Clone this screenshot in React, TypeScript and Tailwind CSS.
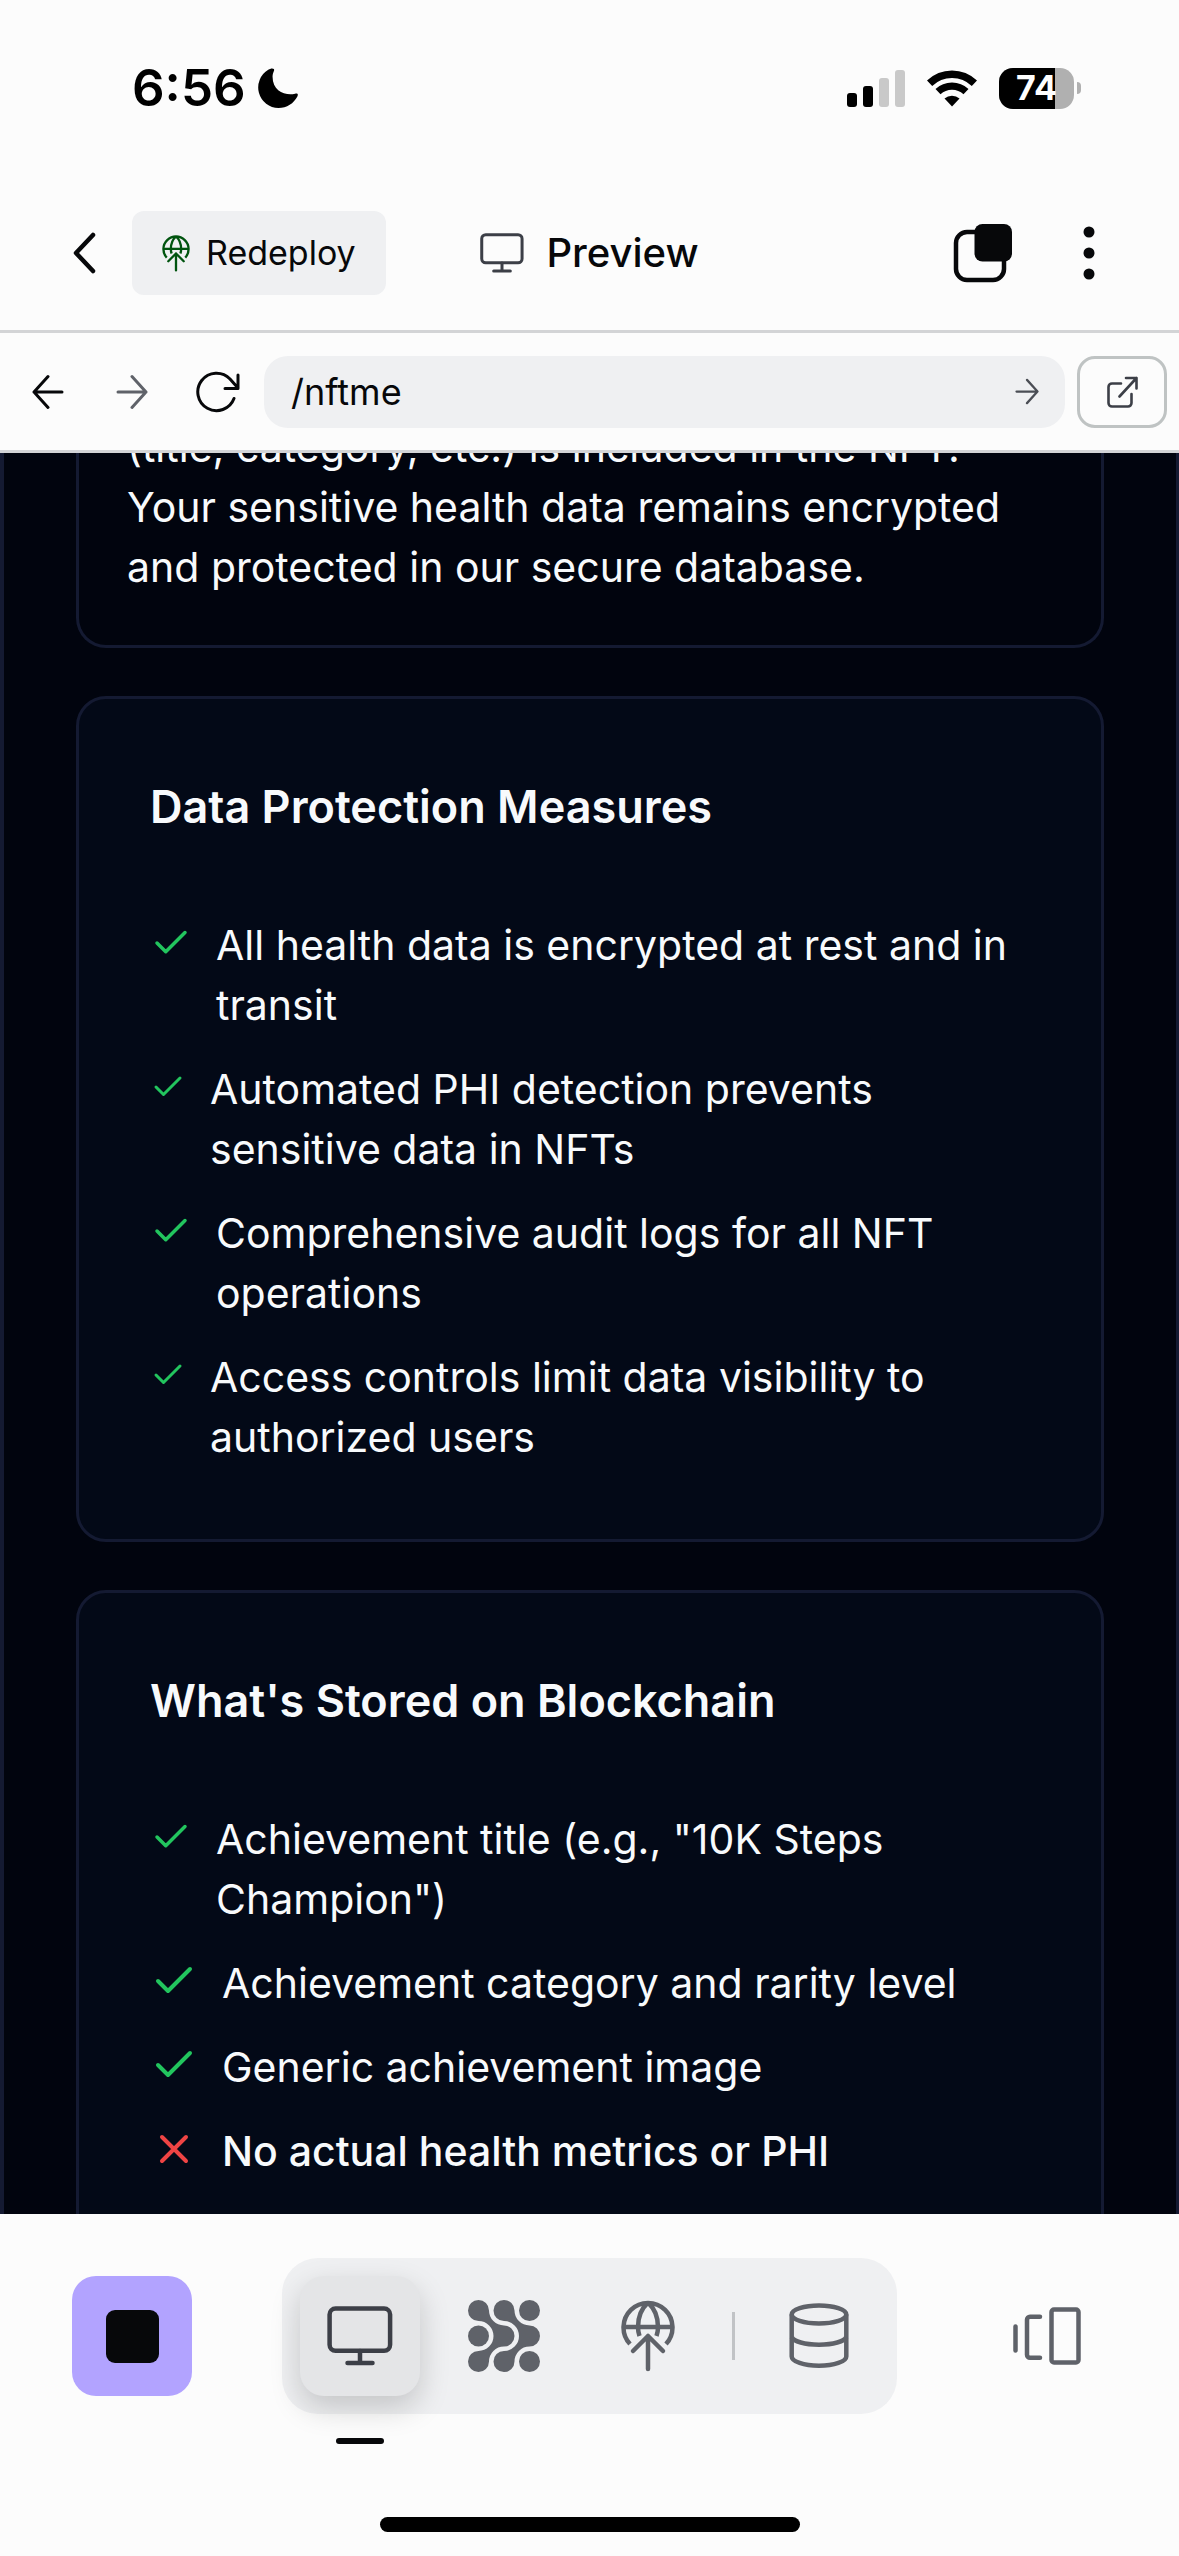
import React from "react";

type IconProps = { className?: string };

function MonitorIcon({ className }: IconProps) {
  return (
    <svg viewBox="0 0 66 60" fill="none" stroke="currentColor" strokeWidth="4.5" strokeLinecap="round" className={className} aria-hidden="true">
      <rect x="2.6" y="2.6" width="60.5" height="42.2" rx="6" />
      <path d="M33 45v11M20.5 57h25" />
    </svg>
  );
}

function GlobeUpIcon({ className }: IconProps) {
  return (
    <svg viewBox="0 0 54 72" fill="none" stroke="currentColor" strokeWidth="4.5" strokeLinejoin="round" className={className} aria-hidden="true">
      <path d="M9 44A24.5 24.5 0 1 1 45 44" />
      <path d="M2.5 27h49" />
      <path d="M26.5 3C20 9 17 18 17 27c0 3 .4 6 1.5 9M27.5 3C34 9 37 18 37 27c0 3-.4 6-1.5 9" />
      <path d="M27 36v33M12 51l15-15 15 15" strokeLinecap="round" />
    </svg>
  );
}

function AgentIcon({ className }: IconProps) {
  const blob =
    "M21 10.5A15 15 0 0 0 36 25.5A10.5 10.5 0 0 1 36 46.5A15 15 0 0 0 21 61.5A10.5 10.5 0 1 1 10.5 51A15 15 0 0 0 10.5 21A10.5 10.5 0 1 1 21 10.5Z";
  return (
    <svg viewBox="0 0 72 72" fill="currentColor" className={className} aria-hidden="true">
      <path d={blob} />
      <path d={blob} transform="translate(25.5 0)" />
      <circle cx="61.5" cy="10.5" r="10.5" />
      <circle cx="10.5" cy="36" r="10.5" />
      <circle cx="61.5" cy="61.5" r="10.5" />
    </svg>
  );
}

function DatabaseIcon({ className }: IconProps) {
  return (
    <svg viewBox="0 0 60 66" fill="none" stroke="currentColor" strokeWidth="4.5" className={className} aria-hidden="true">
      <ellipse cx="30" cy="11.5" rx="27.3" ry="9" />
      <path d="M2.7 11.5v42c0 5 12 9.2 27.3 9.2s27.3-4.2 27.3-9.2v-42" />
      <path d="M2.7 34c2 4.5 13 7.7 27.3 7.7S55.3 38.5 57.3 34" />
    </svg>
  );
}

function DevicesIcon({ className }: IconProps) {
  return (
    <svg viewBox="0 0 68 58" fill="none" stroke="currentColor" strokeWidth="4.5" strokeLinecap="round" className={className} aria-hidden="true">
      <path d="M2.5 19.5v24M27 9.8H17a3 3 0 0 0-3 3v35a3 3 0 0 0 3 3h10" />
      <rect x="38.5" y="2.5" width="27" height="53" rx="2.5" />
    </svg>
  );
}

function ArrowIcon({ className, flip }: IconProps & { flip?: boolean }) {
  return (
    <svg viewBox="0 0 32 36" fill="none" stroke="currentColor" strokeWidth="3" strokeLinecap="round" strokeLinejoin="round" className={className} aria-hidden="true">
      <path d={flip ? "M30 18H2M16 2.5L2 18l14 15.5" : "M2 18h28M16 2.5L30 18 16 33.5"} />
    </svg>
  );
}

function CheckIcon({ className }: IconProps) {
  return (
    <svg viewBox="0 0 24 24" fill="none" stroke="currentColor" strokeWidth="2" strokeLinecap="round" strokeLinejoin="round" className={className} aria-hidden="true">
      <path d="M20 6 9 17l-5-5" />
    </svg>
  );
}

function CrossIcon({ className }: IconProps) {
  return (
    <svg viewBox="0 0 24 24" fill="none" stroke="currentColor" strokeWidth="2" strokeLinecap="round" strokeLinejoin="round" className={className} aria-hidden="true">
      <path d="M18 6 6 18M6 6l12 12" />
    </svg>
  );
}

function StatusBar() {
  return (
    <div className="flex h-[176px] items-center justify-between pr-[98px] pl-[132px] text-black">
      <div className="flex items-center gap-3">
        <span className="text-[51px] leading-[60px] font-semibold">6:56</span>
        <svg viewBox="0 0 39 39" className="h-10 w-10" fill="currentColor" role="img" aria-label="Focus mode">
          <path d="M15.5 1C14-.2 12 .5 10 1.8A20 20 0 0 0 20 39c8 0 15-4.500 18.500-11.500 1-2.200-.3-3-2.300-2.500-9 2.200-22-2-22-16.500 0-2.500.7-4 1.300-5.500.3-.8.3-1.500 0-2Z" />
        </svg>
      </div>
      <div className="flex items-center gap-[22px]">
        <svg viewBox="0 0 58 37" className="h-[37px] w-[58px]" role="img" aria-label="Signal">
          <g fill="#000">
            <rect y="23" width="10" height="14" rx="3" />
            <rect x="16" y="16" width="10" height="21" rx="3" />
          </g>
          <g fill="#c9c9c9">
            <rect x="32" y="8" width="10" height="29" rx="3" />
            <rect x="48" width="10" height="37" rx="3" />
          </g>
        </svg>
        <svg viewBox="0 0 50 37" className="h-[37px] w-[50px]" fill="none" stroke="#000" role="img" aria-label="Wi-Fi">
          <path d="M2.6 13.3A32.3 32.3 0 0 1 47.4 13.3" strokeWidth="7.5" />
          <path d="M11 21.6A20.5 20.5 0 0 1 39 21.6" strokeWidth="7.3" />
          <path d="M25 36.5L17.5 28.5A11.5 11.5 0 0 1 32.5 28.5Z" fill="#000" stroke="none" />
        </svg>
        <div className="flex items-center gap-[3px]">
          <div className="relative flex h-[41px] w-[75px] items-center justify-center overflow-hidden rounded-[14px] bg-[#b0b0b0]">
            <div className="absolute inset-y-0 left-0 w-3/4 bg-black" />
            <span className="relative text-[34px] leading-[40px] font-bold text-white">74</span>
          </div>
          <div className="h-3 w-1 rounded-r-full bg-[#b0b0b0]" />
        </div>
      </div>
    </div>
  );
}

function TitleBar() {
  return (
    <div className="grid h-[154px] grid-cols-[1fr_auto_1fr] items-center px-[72px]">
      <div className="flex items-center gap-9">
        <button type="button" aria-label="Back">
          <svg viewBox="0 0 24 42" className="h-[42px] w-6" fill="none" stroke="#07080a" strokeWidth="4.5" strokeLinecap="round" strokeLinejoin="round">
            <path d="M21 3L4 21l17 18" />
          </svg>
        </button>
        <button type="button" className="flex h-[84px] items-center gap-4 rounded-xl bg-[#eff0f2] px-[30px] text-[34px] leading-[48px] text-[#07080a]">
          <GlobeUpIcon className="h-[37px] w-7 text-[#00540f]" />
          Redeploy
        </button>
      </div>
      <h1 className="flex items-center gap-[22px] text-[40px] leading-[48px] font-medium text-[#07080a]">
        <MonitorIcon className="h-10 w-11 text-[#3c3f47]" />
        Preview
      </h1>
      <div className="mr-3 flex items-center justify-end gap-[70px]">
        <button type="button" aria-label="Tabs">
          <svg viewBox="0 0 60 60" className="h-[60px] w-[60px]" fill="none">
            <rect x="3" y="9" width="48" height="48" rx="11" stroke="#07080a" strokeWidth="4.5" />
            <rect x="21.5" y="1" width="37.5" height="37.5" rx="8" fill="#07080a" />
          </svg>
        </button>
        <button type="button" aria-label="More options">
          <svg viewBox="0 0 12 54" className="h-[54px] w-3" fill="#07080a">
            <circle cx="6" cy="6" r="5.5" />
            <circle cx="6" cy="27" r="5.5" />
            <circle cx="6" cy="48" r="5.5" />
          </svg>
        </button>
      </div>
    </div>
  );
}

function AddressBar() {
  return (
    <div className="flex h-[123px] items-center border-y-3 border-[#d3d4d6] pr-3 pl-8 text-[#07080a]">
      <button type="button" aria-label="Go back">
        <ArrowIcon flip className="h-9 w-8" />
      </button>
      <button type="button" aria-label="Go forward" className="ml-[52px] text-[#5f6269]">
        <ArrowIcon className="h-9 w-8" />
      </button>
      <button type="button" aria-label="Reload" className="ml-[47px]">
        <svg viewBox="0 0 46 44" className="h-11 w-[46px]" fill="none" stroke="currentColor" strokeWidth="3" strokeLinecap="round" strokeLinejoin="round">
          <path d="M39 28.5A18.7 18.7 0 1 1 35 9L43 18M43 5v13.5H30" />
        </svg>
      </button>
      <form className="ml-[23px] flex h-[72px] min-w-0 flex-1 items-center rounded-[24px] bg-[#eff0f2] pr-[26px] pl-[27px]" onSubmit={(e) => e.preventDefault()}>
        <input aria-label="Path" defaultValue="/nftme" className="min-w-0 flex-1 bg-transparent text-[36px] leading-[48px] outline-none" />
        <button type="submit" aria-label="Go" className="text-[#4b4e55]">
          <ArrowIcon className="h-[27px] w-6" />
        </button>
      </form>
      <a href="#open" aria-label="Open in new tab" className="ml-3 flex h-[72px] w-[90px] items-center justify-center rounded-[18px] border-3 border-[#bfc3c3] text-[#3c3f47]">
        <svg viewBox="0 0 32 32" className="h-8 w-8" fill="none" stroke="currentColor" strokeWidth="2.6" strokeLinecap="round" strokeLinejoin="round">
          <path d="M15 7.5H6a3.5 3.5 0 0 0-3.5 3.5v16A3.5 3.5 0 0 0 6 30.5h16a3.5 3.5 0 0 0 3.5-3.5v-9" />
          <path d="M20 2h10.5v10.5M30.5 2L13.5 20.5" />
        </svg>
      </a>
    </div>
  );
}

type Item = { text: string; icon: string; cross?: boolean };

const protection: Item[] = [
  { text: "All health data is encrypted at rest and in transit", icon: "w-[42px]" },
  { text: "Automated PHI detection prevents sensitive data in NFTs", icon: "w-9" },
  { text: "Comprehensive audit logs for all NFT operations", icon: "w-[42px]" },
  { text: "Access controls limit data visibility to authorized users", icon: "w-9" },
];

const stored: Item[] = [
  { text: 'Achievement title (e.g., "10K Steps Champion")', icon: "w-[42px]" },
  { text: "Achievement category and rarity level", icon: "w-12" },
  { text: "Generic achievement image", icon: "w-12" },
  { text: "No actual health metrics or PHI", icon: "w-12", cross: true },
];

function InfoCard({ title, items }: { title: string; items: Item[] }) {
  return (
    <section className="rounded-[30px] border-3 border-[#141a32] bg-[#030917] py-[72px] pr-[60px] pl-[71px]">
      <h2 className="text-[45px] leading-[72px] font-semibold">{title}</h2>
      <ul className="mt-[72px] flex flex-col gap-6">
        {items.map(({ text, icon, cross }) => (
          <li key={text} className="flex gap-6">
            <span className={`mt-1 flex h-12 shrink-0 items-center ${icon}`}>
              {cross ? <CrossIcon className="w-full text-[#ef4444]" /> : <CheckIcon className="w-full text-[#22c55e]" />}
            </span>
            <span className={cross ? "font-medium" : ""}>{text}</span>
          </li>
        ))}
      </ul>
    </section>
  );
}

function NavButton({ label, active, children }: { label: string; active?: boolean; children: React.ReactNode }) {
  return (
    <button
      type="button"
      aria-label={label}
      className={
        active
          ? "relative flex h-[120px] w-[120px] items-center justify-center rounded-[24px] bg-[#e4e5e7] text-[#3c3f47] shadow-[0_12px_30px_rgba(0,0,0,0.18)]"
          : "flex h-[120px] w-[120px] items-center justify-center rounded-[24px] text-[#5f6269]"
      }
    >
      {children}
      {active && <span className="absolute top-[162px] left-9 h-1.5 w-12 rounded-full bg-[#07080a]" />}
    </button>
  );
}

function BottomNav() {
  return (
    <footer className="flex flex-col items-center pt-11 pb-6">
      <nav className="flex w-full items-center justify-between px-[72px]">
        <button type="button" aria-label="Stop" className="flex h-[120px] w-[120px] items-center justify-center rounded-[24px] bg-[#b2a3ff]">
          <span className="h-[53px] w-[53px] rounded-[9px] bg-[#07080a]" />
        </button>
        <div className="flex items-center gap-6 rounded-[36px] bg-[#eff0f2] p-[18px]">
          <NavButton label="Preview" active>
            <MonitorIcon className="h-[60px] w-[66px]" />
          </NavButton>
          <NavButton label="Agent">
            <AgentIcon className="h-[72px] w-[72px]" />
          </NavButton>
          <NavButton label="Deployments">
            <GlobeUpIcon className="h-[72px] w-[54px]" />
          </NavButton>
          <span className="h-12 w-[3px] bg-[#c1c3c6]" />
          <NavButton label="Database">
            <DatabaseIcon className="h-[66px] w-[60px]" />
          </NavButton>
        </div>
        <NavButton label="Switch tabs">
          <DevicesIcon className="h-[58px] w-[68px]" />
        </NavButton>
      </nav>
      <div className="mt-[103px] h-[15px] w-[420px] rounded-full bg-black" />
    </footer>
  );
}

export default function App() {
  return (
    <div className="flex h-screen flex-col bg-[#fcfcfc] font-['Inter',sans-serif]">
      <header>
        <StatusBar />
        <TitleBar />
        <AddressBar />
      </header>
      <main className="min-h-0 flex-1 overflow-hidden border-r-3 border-l-4 border-[#141a32] bg-[#01040e] px-[72px] text-[41px] leading-[60px] text-[#f8fafc]">
        <div className="-mt-9 flex flex-col gap-12">
          <p className="rounded-b-[30px] border-x-3 border-b-3 border-[#141a32] px-12 pb-12">
            (title, category, etc.) is included in the NFT. Your sensitive health data remains encrypted and protected in our secure database.
          </p>
          <InfoCard title="Data Protection Measures" items={protection} />
          <InfoCard title="What's Stored on Blockchain" items={stored} />
        </div>
      </main>
      <BottomNav />
    </div>
  );
}
